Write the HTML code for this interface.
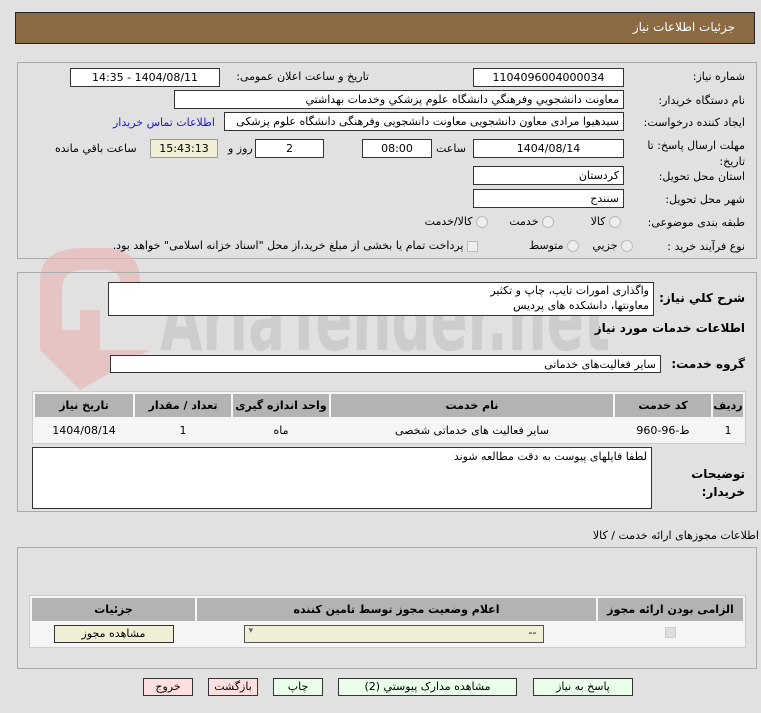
<!DOCTYPE html>
<html><head><meta charset="utf-8"><style>
*{box-sizing:border-box;margin:0;padding:0}
body{width:761px;height:713px;background:#e1e1e1;font-family:"DejaVu Sans",sans-serif;font-size:11px;color:#000;position:relative;overflow:hidden;direction:rtl}
.a{position:absolute;white-space:nowrap}
.in{position:absolute;background:#fff;border:1px solid #333;height:19px;line-height:17px;padding:0 4px;text-align:right;overflow:hidden;white-space:nowrap}
.c{text-align:center}
.panel{position:absolute;left:17px;width:740px;border:1px solid #aaa}
table{position:absolute;border-collapse:separate;border-spacing:2px;background:#f5f5f5;border:1px solid #ccc}
th{background:#b3b3b3;font-weight:bold;height:23px;font-size:11px}
td{background:#f5f5f5;text-align:center;height:22px}
.btn{position:absolute;height:18px;border:1px solid #333;text-align:center;line-height:16px;background:#eaffea}
.radio{display:inline-block;width:12px;height:12px;border-radius:50%;border:1px solid #bbb;background:#eee;vertical-align:middle}
</style></head><body>
<div class="a" style="left:15px;top:12px;width:740px;height:32px;background:#8b6b43;border:1px solid #222"></div>
<div class="a" style="right:26px;top:20px;color:#fff;font-size:12px">جزئیات اطلاعات نیاز</div>

<div class="panel" style="top:62px;height:197px"></div>
<svg class="a" style="left:0;top:240px;direction:ltr" width="700" height="160">
<path d="M40 40 Q40 10 80 8 L110 8 Q140 12 140 40 L140 70 L120 70 L120 40 Q118 30 105 30 L80 30 Q62 32 62 50 L62 90 L80 90 L80 70 L100 70 L100 110 L150 110 L80 150 L40 110 Z" fill="#e9b8b8" opacity="0.7"/>
<text x="160" y="110" font-family="DejaVu Sans" font-size="88" font-weight="bold" fill="#cdcdcd" text-anchor="start" style="direction:ltr" textLength="450" lengthAdjust="spacingAndGlyphs">AriaTender.net</text></svg>

<div class="a" style="right:16px;top:70px">شماره نیاز:</div>
<div class="in c" style="left:473px;top:68px;width:151px">1104096004000034</div>
<div class="a" style="right:392px;top:70px">تاریخ و ساعت اعلان عمومی:</div>
<div class="in c" style="left:70px;top:68px;width:150px">1404/08/11 - 14:35</div>

<div class="a" style="right:16px;top:94px">نام دستگاه خریدار:</div>
<div class="in" style="left:174px;top:90px;width:450px">معاونت دانشجويي وفرهنگي دانشگاه علوم پزشكي وخدمات بهداشتي</div>

<div class="a" style="right:16px;top:116px">ایجاد کننده درخواست:</div>
<div class="in" style="left:224px;top:112px;width:400px">سیدهیوا مرادی معاون دانشجویی معاونت دانشجویی وفرهنگی دانشگاه علوم پزشکی</div>
<div class="a" style="left:113px;top:116px;color:#1a1acc">اطلاعات تماس خریدار</div>

<div class="a" style="right:16px;top:138px;line-height:16px;text-align:right">مهلت ارسال پاسخ: تا<br>تاریخ:</div>
<div class="in c" style="left:473px;top:139px;width:151px">1404/08/14</div>
<div class="a" style="left:436px;top:142px">ساعت</div>
<div class="in c" style="left:362px;top:139px;width:70px">08:00</div>
<div class="in c" style="left:255px;top:139px;width:69px">2</div>
<div class="a" style="left:228px;top:142px">روز و</div>
<div class="in c" style="left:150px;top:139px;width:68px;background:#f0efd6;border-color:#999">15:43:13</div>
<div class="a" style="left:55px;top:142px">ساعت باقي مانده</div>

<div class="a" style="right:16px;top:170px">استان محل تحویل:</div>
<div class="in" style="left:473px;top:166px;width:151px">کردستان</div>
<div class="a" style="right:16px;top:193px">شهر محل تحویل:</div>
<div class="in" style="left:473px;top:189px;width:151px">سنندج</div>

<div class="a" style="right:16px;top:216px">طبقه بندی موضوعی:</div>
<div class="a" style="right:140px;top:215px"><span class="radio"></span> کالا</div>
<div class="a" style="right:207px;top:215px"><span class="radio"></span> خدمت</div>
<div class="a" style="right:273px;top:215px"><span class="radio"></span> کالا/خدمت</div>

<div class="a" style="right:16px;top:240px">نوع فرآیند خرید :</div>
<div class="a" style="right:128px;top:239px"><span class="radio"></span> جزیي</div>
<div class="a" style="right:182px;top:239px"><span class="radio"></span> متوسط</div>
<div class="a" style="right:283px;top:239px"><span style="display:inline-block;width:11px;height:11px;border:1px solid #bbb;background:#eee;vertical-align:middle"></span> پرداخت تمام یا بخشی از مبلغ خرید،از محل "اسناد خزانه اسلامی" خواهد بود.</div>

<div class="panel" style="top:272px;height:240px"></div>
<div class="a" style="right:16px;top:291px;font-weight:bold;font-size:12px">شرح کلي نياز:</div>
<div class="in" style="left:108px;top:282px;width:546px;height:34px;line-height:15px;white-space:normal;background:#fff">واگذاری امورات تایپ، چاپ و تکثیر<br>معاونتها، دانشکده های پردیس</div>
<div class="a" style="right:16px;top:321px;font-weight:bold;font-size:12px">اطلاعات خدمات مورد نیاز</div>
<div class="a" style="right:16px;top:357px;font-weight:bold;font-size:12px">گروه خدمت:</div>
<div class="in" style="left:110px;top:355px;width:551px;height:18px">سایر فعالیت‌های خدماتی</div>

<table style="left:32px;top:391px;width:714px">
<tr><th style="width:30px">ردیف</th><th style="width:96px">کد خدمت</th><th>نام خدمت</th><th style="width:96px">واحد اندازه گیری</th><th style="width:96px">تعداد / مقدار</th><th style="width:98px">تاریخ نیاز</th></tr>
<tr><td>1</td><td>ط-96-960</td><td>سایر فعالیت های خدماتی شخصی</td><td>ماه</td><td>1</td><td>1404/08/14</td></tr>
</table>

<div class="a" style="right:16px;top:465px;font-weight:bold;font-size:12px;line-height:18px;text-align:right">توضیحات<br>خریدار:</div>
<div class="in" style="left:32px;top:447px;width:620px;height:62px;white-space:normal">لطفا فایلهای پیوست به دقت مطالعه شوند</div>

<div class="a" style="right:2px;top:529px">اطلاعات مجوزهای ارائه خدمت / کالا</div>
<div class="panel" style="top:547px;height:122px"></div>
<table style="left:29px;top:595px;width:717px">
<tr><th style="width:145px">الزامی بودن ارائه مجوز</th><th>اعلام وضعیت مجوز توسط تامین کننده</th><th style="width:163px">جزئیات</th></tr>
<tr><td><span style="display:inline-block;width:11px;height:11px;border:1px solid #ccc;background:#ddd"></span></td><td><div style="margin:0 auto;width:300px;height:18px;border:1px solid #555;background:#f0efd6;text-align:right;padding:0 6px;position:relative;left:-3px">--<span style="position:absolute;left:4px;color:#666;font-size:9px">▾</span></div></td><td><div style="margin:0 auto;width:120px;height:18px;border:1px solid #333;background:#f0efd6;line-height:16px">مشاهده مجوز</div></td></tr>
</table>

<div class="btn" style="left:533px;top:678px;width:100px">پاسخ به نیاز</div>
<div class="btn" style="left:338px;top:678px;width:179px">مشاهده مدارک پیوستي (2)</div>
<div class="btn" style="left:273px;top:678px;width:50px">چاپ</div>
<div class="btn" style="left:208px;top:678px;width:50px;background:#ffe0e0">بازگشت</div>
<div class="btn" style="left:143px;top:678px;width:50px;background:#ffe0e0">خروج</div>
</body></html>
